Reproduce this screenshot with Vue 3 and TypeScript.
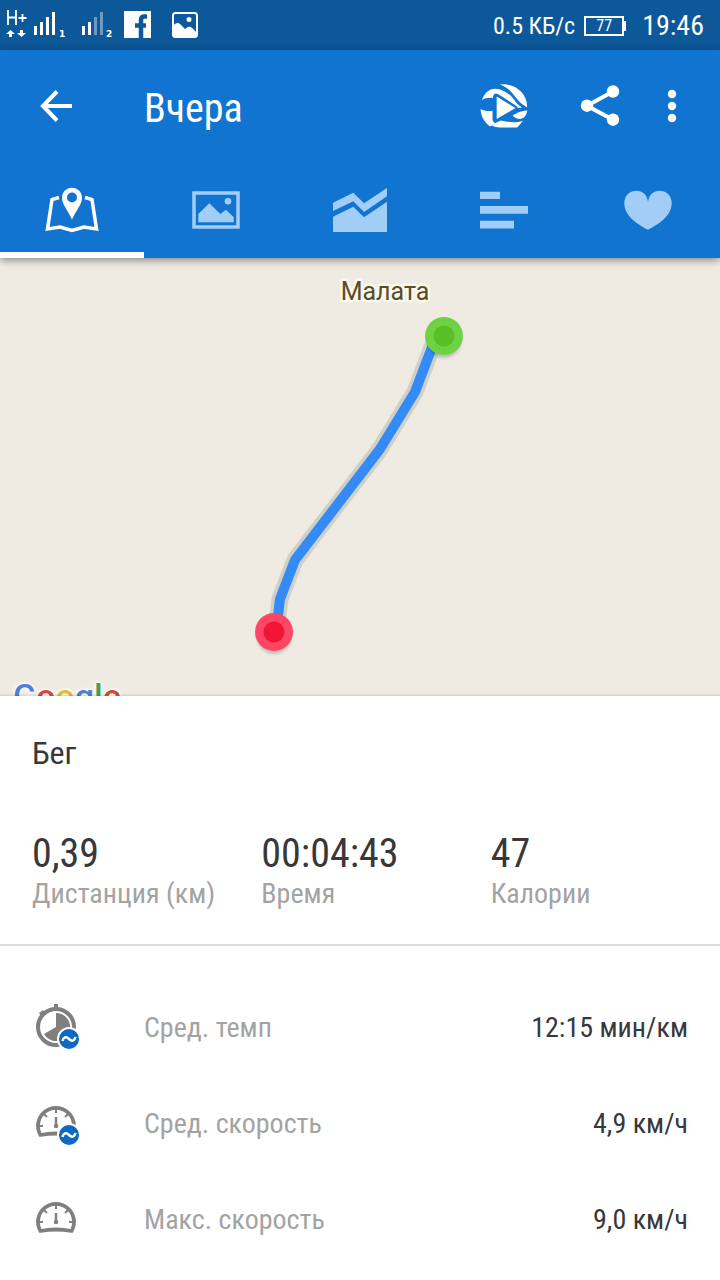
<script setup lang="ts">
import { ref } from 'vue'

type IconName = 'map' | 'photo' | 'chart' | 'bars' | 'heart'
interface Tab { id: IconName; label: string }
interface Stat { value: string; label: string }
interface Row { icon: 'pace' | 'speed'; average: boolean; label: string; value: string }

const tabs: Tab[] = [
  { id: 'map', label: 'Карта' },
  { id: 'photo', label: 'Фото' },
  { id: 'chart', label: 'График' },
  { id: 'bars', label: 'Отрезки' },
  { id: 'heart', label: 'Пульс' },
]
const active = ref<IconName>('map')

const stats: Stat[] = [
  { value: '0,39', label: 'Дистанция (км)' },
  { value: '00:04:43', label: 'Время' },
  { value: '47', label: 'Калории' },
]
const rows: Row[] = [
  { icon: 'pace', average: true, label: 'Сред. темп', value: '12:15 мин/км' },
  { icon: 'speed', average: true, label: 'Сред. скорость', value: '4,9 км/ч' },
  { icon: 'speed', average: false, label: 'Макс. скорость', value: '9,0 км/ч' },
]
const brand = [
  { ch: 'G', tone: 'blue' },
  { ch: 'o', tone: 'red' },
  { ch: 'o', tone: 'yellow' },
  { ch: 'g', tone: 'blue' },
  { ch: 'l', tone: 'green' },
  { ch: 'e', tone: 'red' },
]
const track = '439,70 434,84 415,134 380,191 295,302 280,341 276,374'
</script>

<template>
  <div class="screen">
    <div class="status">
      <div class="status-side">
        <svg width="116" height="50" viewBox="0 0 116 50" fill="#fff" aria-hidden="true">
          <path d="M8 10V25M16 10V25M8 17.500H16M18.500 18H26.500M22.500 14V22" fill="none" stroke="#fff" stroke-width="1.800" />
          <path d="M10.500 30L15 34H12V37H9V34H6ZM21.500 37L26 33H23V30H20V33H17Z" />
          <path d="M34 26H37V35H34ZM40 22H43V35H40ZM46 17H49V35H46ZM52 12H55V35H52Z" />
          <path d="M82 26H85V35H82ZM88 22H91V35H88Z" />
          <path d="M94 17H97V35H94ZM100 12H103V35H100Z" opacity=".4" />
          <text x="59" y="37" class="sim">1</text>
          <text x="106" y="37" class="sim">2</text>
        </svg>
        <svg class="app-icon" width="28" height="28" viewBox="0 0 28 28" aria-hidden="true">
          <path d="M0 0H27V27H0Z" fill="#fff" />
          <path d="M23 5.500H20.500C18 5.500 17 7 17 9V27M11 14.500H22" fill="none" stroke="#0d5899" stroke-width="4.500" />
        </svg>
        <svg class="app-icon wide" width="28" height="28" viewBox="0 0 28 28" aria-hidden="true">
          <rect x="2" y="2" width="24" height="24" rx="2.500" fill="none" stroke="#fff" stroke-width="2" />
          <path d="M2 15C5 11 8 11 11 15L14 18L17 16C19 15 21 16 26 22V26H2Z" fill="#fff" />
          <circle cx="18" cy="8.500" r="2.500" fill="#fff" />
        </svg>
      </div>
      <div class="status-side right">
        <span class="net">0.5 КБ/с</span>
        <span class="battery">77</span>
        <time class="clock">19:46</time>
      </div>
    </div>

    <header class="header">
      <div class="toolbar">
        <button class="tool back" aria-label="Назад">
          <svg width="32" height="32" viewBox="0 0 32 32"><path d="M17 1.500L3 16L17 30.500M3 16H32" fill="none" stroke="#fff" stroke-width="4" /></svg>
        </button>
        <h1 class="title">Вчера</h1>
        <button class="tool" aria-label="Повтор">
          <svg width="48" height="44" viewBox="0 0 48 44" fill="#fff">
            <path d="M20 .500C34 -1.500 48 9 47 23.500C43 21 40 18.500 37 15C32 8 28 3.500 20 .500Z" />
            <path d="M2 16C4 10 8 5 15 4.700C23 5 30 10 34 15.500C36 18.500 38 21 42 23.500L38 24L36.500 22L18 10C15 8.500 13 10 13 14C9 13.500 5 14 2 16Z" />
            <path d="M16.700 12.500L35.500 24L16.700 35Z" />
            <path d="M.500 25C4 27 8 27.500 12.500 26.800V35C12.500 37.500 13.500 38.500 15.500 39L10 42.500C4 38 1 32 .500 25Z" />
            <path d="M32.500 31.500L38 28.500C41 27 44 27 47.300 26.500C46.500 31 45 34 40 35C37 35 34.500 33.500 32.500 31.500Z" />
            <path d="M11 41L21 36.500C28 38 35 39.500 43 36.800C40 40 39 42 37 43.600H19.500C16.500 43.500 13 42.500 11 41Z" />
          </svg>
        </button>
        <button class="tool" aria-label="Поделиться">
          <svg width="40" height="44" viewBox="0 0 40 44" fill="#fff">
            <path d="M33 7.500L7 21.700L33 35.700" fill="none" stroke="#fff" stroke-width="4" />
            <circle cx="33" cy="7.500" r="6.200" /><circle cx="7" cy="21.700" r="6.200" /><circle cx="33" cy="35.700" r="6.200" />
          </svg>
        </button>
        <button class="tool more" aria-label="Ещё">
          <svg width="10" height="34" viewBox="0 0 10 34" fill="#fff"><circle cx="5" cy="5" r="4.200" /><circle cx="5" cy="17" r="4.200" /><circle cx="5" cy="29" r="4.200" /></svg>
        </button>
      </div>
      <nav class="tabs">
        <button v-for="t in tabs" :key="t.id" class="tab" :class="{ active: active === t.id }" :aria-label="t.label" @click="active = t.id">
          <svg v-if="t.id === 'map'" width="56" height="48" viewBox="0 0 56 48">
            <path d="M15 11.500L8 13.500L3.500 43L16 41L28 44.500L40 41L52.500 43L48 13.500L41 11.500" fill="none" stroke="currentColor" stroke-width="3.500" />
            <path fill="currentColor" fill-rule="evenodd" d="M28 1.700C33.500 1.700 38 6 38 11.700C38 18 33 23 28 33.500C23 23 18 18 18 11.700C18 6 22.500 1.700 28 1.700ZM28 6.500A5 5 0 1 0 28 16.500A5 5 0 1 0 28 6.500Z" />
          </svg>
          <svg v-else-if="t.id === 'photo'" width="48" height="38" viewBox="0 0 48 38" fill="currentColor">
            <path d="M2 2H46V36H2Z" fill="none" stroke="currentColor" stroke-width="3.500" />
            <path d="M6.300 31.300V23L17.300 12.300L28.300 23L34 18.700L41.700 26.300V31.300Z" />
            <circle cx="36" cy="10.300" r="3.300" />
          </svg>
          <svg v-else-if="t.id === 'chart'" width="56" height="44" viewBox="0 0 56 44" fill="currentColor">
            <path d="M1 14.700L21.300 4.700L32 15.300L55 0V8.300L32 24L21.300 13.300L1 23Z" />
            <path d="M1 28.700L21.300 18.700L32 29.300L55 13.700V44H1Z" />
          </svg>
          <svg v-else-if="t.id === 'bars'" width="48" height="38" viewBox="0 0 48 38" fill="currentColor">
            <path d="M0 .700H20V8H0ZM0 15H48V22.700H0ZM0 29.700H34V37.500H0Z" />
          </svg>
          <svg v-else width="48" height="40" viewBox="0 0 48 40" fill="currentColor">
            <path d="M24 39.700C14 35 .300 26 .300 13C.300 6 5.500 .700 12 .700C19 .700 23 5 24 11.700C25 5 29 .700 36 .700C42.500 .700 47.700 6 47.700 13C47.700 26 34 35 24 39.700Z" />
          </svg>
        </button>
      </nav>
    </header>

    <main>
      <section class="map" aria-label="Маршрут">
        <svg class="route" viewBox="0 0 720 438" preserveAspectRatio="xMidYMid slice">
          <defs>
            <filter id="soft" x="-30%" y="-30%" width="160%" height="160%"><feGaussianBlur stdDeviation="1.5" /></filter>
          </defs>
          <text x="385" y="42" class="place">Малата</text>
          <g fill="none" stroke-linejoin="round">
            <polyline :points="track" stroke="#d0d1c6" stroke-width="17" />
            <polyline :points="track" stroke="#348bf6" stroke-width="10" />
          </g>
          <circle cx="444" cy="83" r="17" class="shade" />
          <circle cx="444" cy="78" r="19" fill="#6fd243" /><circle cx="444" cy="78" r="10.500" fill="#58bf26" />
          <circle cx="274" cy="379" r="17" class="shade" />
          <circle cx="274" cy="374" r="19" fill="#ff4765" /><circle cx="274" cy="374" r="10.500" fill="#f01437" />
        </svg>
        <div class="brand"><span v-for="(c, i) in brand" :key="i" :class="c.tone">{{ c.ch }}</span></div>
      </section>

      <section class="summary">
        <h2 class="sport">Бег</h2>
        <dl class="stats">
          <div v-for="s in stats" :key="s.label" class="stat">
            <dd class="big">{{ s.value }}</dd>
            <dt class="muted">{{ s.label }}</dt>
          </div>
        </dl>
      </section>

      <ul class="rows">
        <li v-for="r in rows" :key="r.label" class="row">
          <svg class="row-icon" width="48" height="50" viewBox="0 0 48 50" aria-hidden="true">
            <g v-if="r.icon === 'pace'" fill="#7f7f7f">
              <circle cx="22" cy="25" r="18" fill="none" stroke="#7f7f7f" stroke-width="4" />
              <path d="M20 2H24V7H20ZM5 11L9 8L12 12L8 15Z" />
              <path d="M22 25V11A14 14 0 1 1 10 32Z" />
            </g>
            <g v-else fill="none" stroke="#7f7f7f">
              <path d="M6.500 37A18 18 0 1 1 37.500 37Q22 34 6.500 37Z" stroke-width="3.800" />
              <path d="M22 11V15M5 28H9M39 28H35M10 16L13 19M34 16L31 19" stroke-width="2" />
              <path d="M22 19V28" stroke-width="2.500" />
              <circle cx="22" cy="28" r="2.200" fill="#7f7f7f" stroke="none" />
            </g>
            <g v-if="r.average">
              <circle cx="35" cy="37" r="11" fill="#0d69c4" stroke="#fff" stroke-width="2" />
              <path d="M28.500 39C29.500 35 32 34 35 37C38 40 40.500 39 41.500 35" fill="none" stroke="#fff" stroke-width="2.600" />
            </g>
          </svg>
          <span class="row-label muted">{{ r.label }}</span>
          <span class="row-value">{{ r.value }}</span>
        </li>
      </ul>
    </main>
  </div>
</template>

<style>
body { margin: 0; background: #fff; }
</style>

<style scoped>
.screen {
  min-height: 100vh;
  background: #fff;
  color: #383838;
  font-family: "Roboto Condensed", "Liberation Sans Narrow", Roboto, sans-serif;
}
h1, h2, dl, dd, ul { margin: 0; padding: 0; font-weight: 400; }
button { border: 0; padding: 0; background: none; cursor: pointer; }
svg { display: block; }

.status {
  display: flex;
  justify-content: space-between;
  height: 50px;
  padding-right: 16px;
  background: #0d5899;
  color: #fff;
}
.status-side { display: flex; align-items: center; }
.status-side.right { padding-top: 1px; }
.sim { font: 700 9px "DejaVu Sans", sans-serif; }
.app-icon { margin-left: 8px; }
.app-icon.wide { margin-left: 19px; }
.net { font-size: 24px; }
.battery {
  position: relative;
  box-sizing: border-box;
  width: 40px;
  height: 20px;
  margin: 0 18px 0 9px;
  border: 2px solid #fff;
  font-size: 16px;
  line-height: 16px;
  text-align: center;
}
.battery::after {
  content: "";
  position: absolute;
  top: 3px;
  right: -4px;
  width: 2px;
  height: 10px;
  background: #fff;
}
.clock { font-size: 28px; }

.header {
  position: relative;
  z-index: 1;
  background: #1274d1;
  box-shadow: 0 2px 8px rgba(0, 0, 0, .45);
}
.toolbar { display: flex; align-items: center; height: 112px; padding-right: 24px; }
.tool { display: grid; place-items: center; width: 96px; height: 96px; }
.tool.back { width: 112px; }
.tool.more { width: 48px; }
.title { flex: 1; margin-left: 32px; padding-top: 6px; color: #fff; font-size: 40px; line-height: 48px; }
.tabs { display: grid; grid-template-columns: repeat(5, 1fr); height: 96px; }
.tab {
  display: grid;
  place-items: center;
  border-top: 6px solid transparent;
  border-bottom: 6px solid transparent;
  color: #a1cdf6;
}
.tab.active { border-bottom-color: #fff; color: #fff; }

.map { position: relative; height: 438px; overflow: hidden; background: #efebe3; }
.route { width: 100%; height: 100%; }
.place {
  fill: #594c29;
  stroke: #faf7ec;
  stroke-width: 5px;
  stroke-linejoin: round;
  paint-order: stroke;
  font-family: Roboto, sans-serif;
  font-size: 25px;
  text-anchor: middle;
}
.shade { fill: #000; opacity: .18; filter: url(#soft); }
.brand {
  position: absolute;
  left: 13px;
  bottom: -20px;
  font: 500 34px/40px Roboto, sans-serif;
  text-shadow: 0 0 3px #fff, 0 0 3px #fff, 0 0 5px #fff;
}
.brand .blue { color: #4a80d9; }
.brand .red { color: #d04a43; }
.brand .yellow { color: #e8bd33; }
.brand .green { color: #40a05a; }

.summary {
  position: relative;
  padding: 37px 0 34px 32px;
  border-bottom: 2px solid #dcdcdc;
  background: #fff;
  box-shadow: 0 -1px 2px rgba(0, 0, 0, .15);
}
.sport { font-size: 32px; line-height: 40px; }
.stats { display: grid; grid-template-columns: repeat(3, 1fr); margin-top: 57px; }
.stat { display: flex; flex-direction: column; }
.big { font-size: 40px; line-height: 48px; }
.muted { color: #a3a3a3; }
.stat .muted { font-size: 28px; line-height: 32px; }

.rows { padding: 33px 32px 12px 34px; list-style: none; }
.row { display: flex; align-items: center; height: 96px; font-size: 28px; line-height: 34px; }
.row-label { flex: 1; margin-left: 62px; }
.row-label, .row-value { padding-top: 2px; }
</style>
